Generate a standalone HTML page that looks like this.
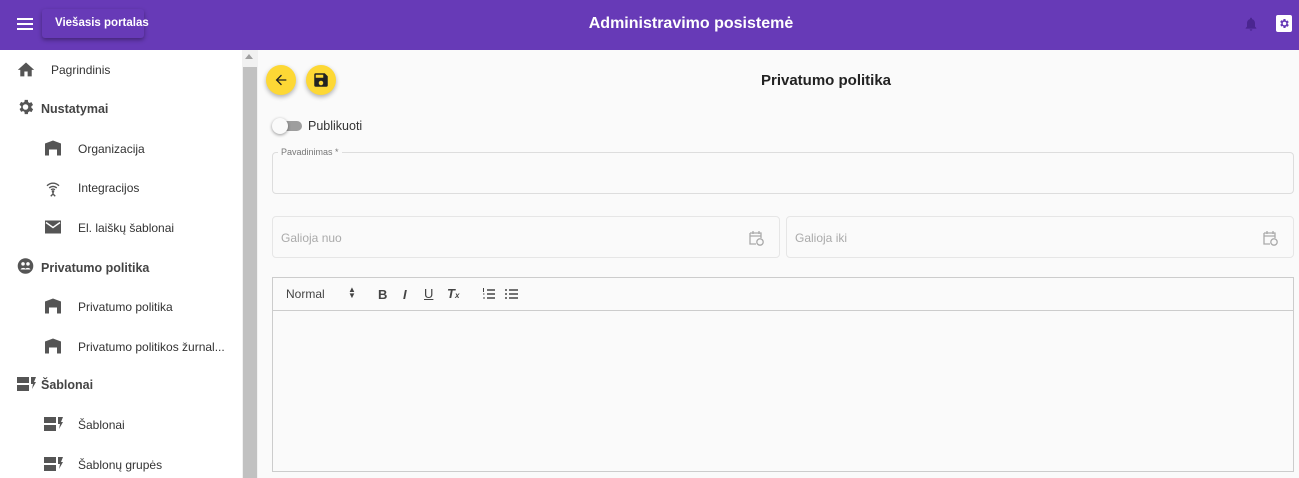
<!DOCTYPE html>
<html><head><style>
*{box-sizing:border-box;margin:0;padding:0}
body{width:1299px;height:478px;overflow:hidden;font-family:"Liberation Sans",sans-serif;background:#fafafa;position:relative}
.hdr{position:absolute;left:0;top:0;width:1299px;height:50px;background:#673ab7;color:#fff}
.abs{position:absolute}
.side{position:absolute;left:0;top:50px;width:242px;height:428px;background:#fff}
.sb{position:absolute;left:242px;top:50px;width:16px;height:428px;background:#f1f1f1}
.it{position:absolute;font-size:12px;color:#333;transform:translateY(-50%);white-space:nowrap}
.grp{position:absolute;font-size:12.5px;color:#444;font-weight:bold;transform:translateY(-50%);white-space:nowrap}
.ico{position:absolute;transform:translateY(-50%)}
.fld{position:absolute;border:1px solid #e6e6e6;border-radius:4px}
.ph{position:absolute;font-size:12px;color:#aaa}
</style></head><body>
<div class="hdr">
 <div class="abs" style="left:17px;top:18px;width:16px;height:2px;background:#fff;box-shadow:0 5px 0 #fff,0 10px 0 #fff"></div>
 <div class="abs" style="left:42px;top:9px;width:102px;height:29px;background:#673ab7;box-shadow:0 2px 4px rgba(0,0,0,.35);border-radius:3px;font-size:11.5px;font-weight:bold;line-height:29px;padding-left:13px;white-space:nowrap">Viešasis portalas</div>
 <div class="abs" style="left:0;width:1382px;top:15px;text-align:center;font-size:16px;font-weight:bold">Administravimo posistemė</div>
 <svg class="abs" style="left:1243px;top:15px" width="16" height="18" viewBox="0 0 24 24"><path fill="#4a2590" d="M12 22c1.1 0 2-.9 2-2h-4c0 1.1.9 2 2 2zm6-6v-5c0-3.07-1.64-5.64-4.5-6.32V4a1.5 1.5 0 0 0-3 0v.68C7.63 5.36 6 7.92 6 11v5l-2 2v1h16v-1z"/></svg>
 <div class="abs" style="left:1276px;top:15px;width:16px;height:17px;background:#fff;border-radius:2px"></div>
 <svg class="abs" style="left:1278px;top:17px" width="12" height="13" viewBox="0 0 24 24"><path fill="#673ab7" d="M19.4 13a7.5 7.5 0 0 0 0-2l2.1-1.6-2-3.5-2.5 1a7 7 0 0 0-1.7-1L15 3h-4l-.4 2.6a7 7 0 0 0-1.7 1l-2.5-1-2 3.5L6.6 11a7.5 7.5 0 0 0 0 2l-2.1 1.6 2 3.5 2.5-1a7 7 0 0 0 1.7 1L11 21h4l.4-2.6a7 7 0 0 0 1.7-1l2.5 1 2-3.5zM13 15.5a3.5 3.5 0 1 1 0-7 3.5 3.5 0 0 1 0 7z"/></svg>
</div>
<div class="side"></div>
<div class="sb"><div class="abs" style="left:3px;top:4px;width:0;height:0;border-left:4px solid transparent;border-right:4px solid transparent;border-bottom:5px solid #a0a0a0"></div><div class="abs" style="left:1px;top:17px;width:14px;height:411px;background:#c1c1c1"></div></div>

<svg class="ico" style="left:16px;top:69px" width="20" height="18" viewBox="0 0 24 22"><path fill="#555" d="M10 20v-6h4v6h5v-8h3L12 3 2 12h3v8z"/></svg>
<div class="it" style="left:51px;top:70px">Pagrindinis</div>
<svg class="ico" style="left:16px;top:107px" width="19" height="19" viewBox="0 0 24 24"><path fill="#555" d="M19.4 13a7.5 7.5 0 0 0 0-2l2.1-1.6-2-3.5-2.5 1a7 7 0 0 0-1.7-1L15 3h-4l-.4 2.6a7 7 0 0 0-1.7 1l-2.5-1-2 3.5L6.6 11a7.5 7.5 0 0 0 0 2l-2.1 1.6 2 3.5 2.5-1a7 7 0 0 0 1.7 1L11 21h4l.4-2.6a7 7 0 0 0 1.7-1l2.5 1 2-3.5zM12 15.5a3.5 3.5 0 1 1 0-7 3.5 3.5 0 0 1 0 7z"/></svg>
<div class="grp" style="left:41px;top:109px">Nustatymai</div>

<svg class="ico" style="left:45px;top:148px" width="16" height="15" viewBox="0 0 16 15"><path fill="#555" d="M0 15V3l8-3 8 3v12h-4V9H4v6z"/></svg>
<div class="it" style="left:78px;top:149px">Organizacija</div>
<svg class="ico" style="left:44px;top:188px" width="18" height="18" viewBox="0 0 24 24"><g fill="none" stroke="#555" stroke-width="1.8"><path d="M4 9a11 11 0 0 1 16 0M7 12a7 7 0 0 1 10 0M9.5 14.5a3.5 3.5 0 0 1 5 0"/><path d="M12 17v3M9 23l3-3 3 3"/></g><circle cx="12" cy="16.5" r="1.7" fill="#555"/></svg>
<div class="it" style="left:78px;top:188px">Integracijos</div>
<svg class="ico" style="left:45px;top:227px" width="16" height="13" viewBox="0 0 16 13"><path fill="#555" d="M0 0h16v13H0z"/><path fill="none" stroke="#fff" stroke-width="1.4" d="M1 2l7 5 7-5"/></svg>
<div class="it" style="left:78px;top:228px">El. laiškų šablonai</div>

<svg class="ico" style="left:17px;top:266px" width="17" height="17" viewBox="0 0 24 24"><circle cx="12" cy="12" r="11" fill="#555"/><circle cx="8.5" cy="9" r="2.5" fill="#fff"/><circle cx="15.5" cy="9" r="2.5" fill="#fff"/><path fill="#fff" d="M5 17c1-3 6-3 7-1 1-2 6-2 7 1z"/></svg>
<div class="grp" style="left:41px;top:268px">Privatumo politika</div>
<svg class="ico" style="left:45px;top:306px" width="16" height="15" viewBox="0 0 16 15"><path fill="#555" d="M0 15V3l8-3 8 3v12h-4V9H4v6z"/></svg>
<div class="it" style="left:78px;top:307px">Privatumo politika</div>
<svg class="ico" style="left:45px;top:346px" width="16" height="15" viewBox="0 0 16 15"><path fill="#555" d="M0 15V3l8-3 8 3v12h-4V9H4v6z"/></svg>
<div class="it" style="left:78px;top:347px">Privatumo politikos žurnal...</div>

<svg class="ico" style="left:17px;top:384px" width="19" height="14" viewBox="0 0 19 14"><path fill="#555" d="M0 0h12v6H0zM0 8h12v6H0zM14 0h5l-2 5h2l-4 7 1-5h-2z"/></svg>
<div class="grp" style="left:41px;top:385px">Šablonai</div>
<svg class="ico" style="left:44px;top:424px" width="19" height="14" viewBox="0 0 19 14"><path fill="#555" d="M0 0h12v6H0zM0 8h12v6H0zM14 0h5l-2 5h2l-4 7 1-5h-2z"/></svg>
<div class="it" style="left:78px;top:425px">Šablonai</div>
<svg class="ico" style="left:44px;top:464px" width="19" height="14" viewBox="0 0 19 14"><path fill="#555" d="M0 0h12v6H0zM0 8h12v6H0zM14 0h5l-2 5h2l-4 7 1-5h-2z"/></svg>
<div class="it" style="left:78px;top:465px">Šablonų grupės</div>

<!-- main -->
<div class="abs" style="left:266px;top:65px;width:30px;height:30px;border-radius:50%;background:#fdd835;box-shadow:0 2px 5px rgba(0,0,0,.3)"></div>
<svg class="abs" style="left:273px;top:72px" width="16" height="16" viewBox="0 0 24 24"><path fill="#222" d="M20 11H7.8l5.6-5.6L12 4l-8 8 8 8 1.4-1.4L7.8 13H20z"/></svg>
<div class="abs" style="left:306px;top:65px;width:30px;height:30px;border-radius:50%;background:#fdd835;box-shadow:0 2px 5px rgba(0,0,0,.3)"></div>
<svg class="abs" style="left:312px;top:71px" width="18" height="18" viewBox="0 0 24 24"><path fill="#222" d="M17 3H5a2 2 0 0 0-2 2v14a2 2 0 0 0 2 2h14a2 2 0 0 0 2-2V7zm-5 16a3 3 0 1 1 0-6 3 3 0 0 1 0 6zm3-10H5V5h10z"/></svg>
<div class="abs" style="left:0;width:1652px;top:72px;text-align:center;font-size:15px;font-weight:bold;color:#222">Privatumo politika</div>

<div class="abs" style="left:280px;top:121px;width:22px;height:10px;border-radius:5px;background:#9e9e9e"></div>
<div class="abs" style="left:272px;top:118px;width:16px;height:16px;border-radius:50%;background:#fafafa;box-shadow:0 1px 3px rgba(0,0,0,.4)"></div>
<div class="abs" style="left:308px;top:119px;font-size:12.5px;color:#333">Publikuoti</div>

<div class="fld" style="left:272px;top:152px;width:1022px;height:42px;border-color:#ddd"></div>
<div class="abs" style="left:278px;top:147px;padding:0 3px;background:#fafafa;font-size:9px;color:#777">Pavadinimas *</div>

<div class="fld" style="left:272px;top:216px;width:508px;height:42px"></div>
<div class="ph" style="left:281px;top:231px">Galioja nuo</div>
<div class="fld" style="left:786px;top:216px;width:508px;height:42px"></div>
<div class="ph" style="left:795px;top:231px">Galioja iki</div>
<svg class="abs" style="left:749px;top:230px" width="15" height="16" viewBox="0 0 15 16"><path fill="none" stroke="#aaa" stroke-width="1.3" d="M1 3h11v5M1 3v11h6M4 1v3M10 1v3M1 6h11"/><circle cx="11" cy="12" r="3.2" fill="none" stroke="#aaa" stroke-width="1.3"/></svg>
<svg class="abs" style="left:1263px;top:230px" width="15" height="16" viewBox="0 0 15 16"><path fill="none" stroke="#aaa" stroke-width="1.3" d="M1 3h11v5M1 3v11h6M4 1v3M10 1v3M1 6h11"/><circle cx="11" cy="12" r="3.2" fill="none" stroke="#aaa" stroke-width="1.3"/></svg>

<div class="abs" style="left:272px;top:277px;width:1022px;height:195px;border:1px solid #ccc"></div>
<div class="abs" style="left:272px;top:310px;width:1022px;height:1px;background:#ccc"></div>
<div class="abs" style="left:286px;top:287px;font-size:12px;color:#444">Normal</div>
<div class="abs" style="left:348px;top:287px;font-size:8px;color:#444;line-height:6px">▲<br>▼</div>
<div class="abs" style="left:378px;top:287px;font-size:13px;font-weight:bold;color:#444">B</div>
<div class="abs" style="left:403px;top:287px;font-size:13px;font-style:italic;font-weight:bold;color:#444">I</div>
<div class="abs" style="left:424px;top:286px;font-size:13px;text-decoration:underline;color:#444">U</div>
<div class="abs" style="left:447px;top:286px;font-size:13px;font-style:italic;font-weight:bold;color:#444">T<span style="font-size:8px">x</span></div>
<svg class="abs" style="left:482px;top:288px" width="13" height="12" viewBox="0 0 13 12"><path stroke="#444" stroke-width="1.5" d="M5 2h8M5 6h8M5 10h8"/><path stroke="#444" stroke-width="1" d="M1.5 0v4M1 6h1.5M1 10h2"/></svg>
<svg class="abs" style="left:505px;top:288px" width="13" height="12" viewBox="0 0 13 12"><path stroke="#444" stroke-width="1.5" d="M4 2h9M4 6h9M4 10h9M0 2h2M0 6h2M0 10h2"/></svg>
</body></html>
